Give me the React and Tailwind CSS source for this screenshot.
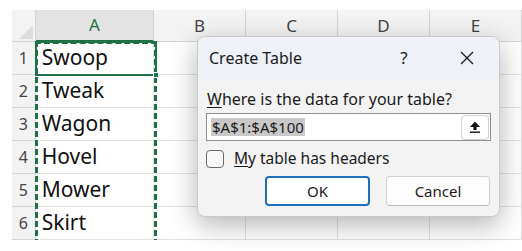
import React from "react";

const rows = ["Swoop", "Tweak", "Wagon", "Hovel", "Mower", "Skirt"];
const cols = ["B", "C", "D", "E"];

const font = { fontFamily: '"Noto Sans", "Open Sans", sans-serif' };

const App = () => {
  return (
    <div className="w-[522px] h-[251px] bg-white overflow-hidden relative" style={font}>
      <div className="ml-[12px] mt-[10px] w-[510px] h-[230px] overflow-hidden relative">
        {/* header row */}
        <div className="flex h-[32px]">
          <div className="w-[24px] h-full bg-[#f3f3f3] border-b border-r border-[#d4d4d4] flex items-end justify-end p-[2px]">
            <div className="w-0 h-0 border-l-[14px] border-l-transparent border-b-[14px] border-b-[#dcdcdc]"></div>
          </div>
          <div className="w-[120px] h-full bg-[#e3e3e3] border-b-2 border-[#1e7145] border-r border-r-[#d4d4d4] flex items-center justify-center text-[17px] text-[#1e7145]">
            A
          </div>
          {cols.map((c) => (
            <div
              key={c}
              className="w-[92px] shrink-0 h-full bg-[#f3f3f3] border-b border-r border-[#d4d4d4] flex items-center justify-center text-[17px] text-[#444]"
            >
              {c}
            </div>
          ))}
        </div>
        {/* rows */}
        {rows.map((r, i) => (
          <div key={r} className="flex h-[33px]">
            <div className="w-[24px] h-full bg-[#f3f3f3] border-b border-r border-[#d4d4d4] flex items-center justify-center text-[16px] text-[#444]">
              {i + 1}
            </div>
            <div className="w-[120px] h-full bg-white border-b border-r border-[#e1e1e1] flex items-center pl-[6px] text-[21px] text-[#111]">
              {r}
            </div>
            {cols.map((c) => (
              <div key={c} className="w-[92px] shrink-0 h-full bg-white border-b border-r border-[#e1e1e1]"></div>
            ))}
          </div>
        ))}
        {/* marching ants around A1:A100 */}
        <div className="absolute left-[23px] top-[31px] w-[122px] h-[240px] border-[3px] border-dashed border-[#1e7145]"></div>
        {/* active cell A1 */}
        <div className="absolute left-[23px] top-[31px] w-[122px] h-[35px] border-2 border-[#1e7145]"></div>
        <div className="absolute left-[141px] top-[62px] w-[6px] h-[6px] bg-[#1e7145] border border-white"></div>
      </div>

      {/* dialog */}
      <div className="absolute left-[197px] top-[36px] w-[303px] h-[181px] rounded-[8px] border border-[#c9c9c9] bg-[#f3f3f3] shadow-[0_8px_28px_rgba(0,0,0,0.3)] overflow-hidden text-[#1b1b1b]">
        <div className="h-[42px] bg-[#eef2f8] flex items-center pl-[11px]">
          <span className="text-[16px] flex-1">Create Table</span>
          <span className="text-[17px] w-[40px] mr-[11px] text-center">?</span>
          <span className="w-[64px] flex items-center justify-center">
            <svg width="16" height="16" viewBox="0 0 16 16">
              <path d="M2 2 L14 14 M14 2 L2 14" stroke="#1b1b1b" strokeWidth="1.3" fill="none" />
            </svg>
          </span>
        </div>
        <div className="px-[8px] pt-[10px]">
          <div className="text-[16px] leading-[20px] pl-[1px]">
            <span className="underline underline-offset-2">W</span>here is the data for your table?
          </div>
          <div className="mt-[4px] h-[28px] bg-white border border-[#8f8f8f] flex items-center pl-[4px] pr-[1px]">
            <span className="bg-[#c8c8c8] text-[15px] leading-[18px] px-[1px]">$A$1:$A$100</span>
            <div className="ml-auto w-[28px] h-[25px] rounded-[4px] border border-[#d0d0d0] bg-white flex items-center justify-center">
              <svg width="14" height="14" viewBox="0 0 14 14">
                <path d="M7 1.5 L12 7 H8.6 V10 H5.4 V7 H2 Z" fill="#111" />
                <rect x="2" y="11.5" width="10" height="1.4" fill="#111" />
              </svg>
            </div>
          </div>
          <div className="mt-[6px] flex items-center">
            <div className="w-[18px] h-[18px] rounded-[4px] border border-[#6a6a6a] bg-[#f8f8f8]"></div>
            <span className="ml-[10px] text-[15.5px]">
              <span className="underline underline-offset-2">M</span>y table has headers
            </span>
          </div>
          <div className="mt-[6px] flex justify-end gap-[16px] pr-[1px]">
            <button className="w-[105px] h-[30px] rounded-[4px] bg-white border-2 border-[#1f6fbf] text-[15px] flex items-center justify-center">
              OK
            </button>
            <button className="w-[104px] h-[30px] rounded-[4px] bg-[#fdfdfd] border border-[#d2d2d2] border-b-[#bdbdbd] text-[15px] flex items-center justify-center">
              Cancel
            </button>
          </div>
        </div>
      </div>
    </div>
  );
};

export default App;
